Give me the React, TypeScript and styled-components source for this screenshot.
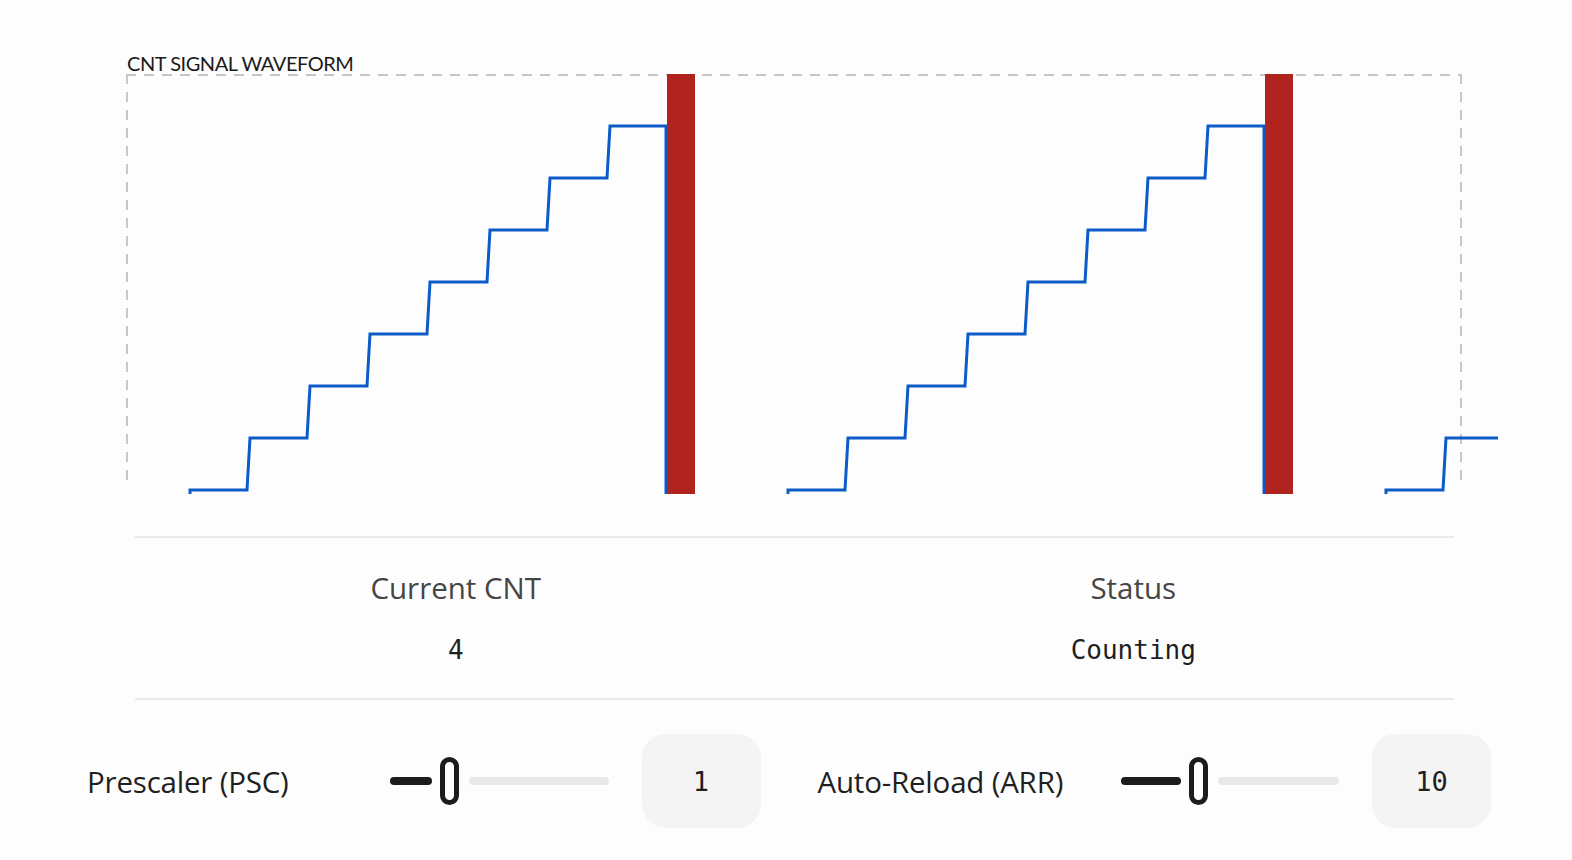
import React, { ReactElement } from 'react';
import styled, { createGlobalStyle } from 'styled-components';

const GlobalStyle = createGlobalStyle`
  html,
  body {
    margin: 0;
    padding: 0;
    background: #fdfdfd;
  }
  body {
    font-family: 'Open Sans', Roboto, 'Liberation Sans', Arial, sans-serif;
    -webkit-font-smoothing: antialiased;
  }
`;

const PageStyled = styled.div`
  width: 1572px;
  height: 860px;
  box-sizing: border-box;
  padding: 52px 81px 0 87px;
  overflow: hidden;
`;

const ChartSection = styled.section`
  margin: 0 29px 0 39px;
`;

const ChartTitle = styled.div`
  font-family: Lato, 'Liberation Sans', sans-serif;
  font-size: 20px;
  line-height: 22px;
  color: #1a1a1a;
  margin-left: 1px;
  letter-spacing: -0.45px;
`;

const dash = '#c7c7c7';

const ChartFrame = styled.div`
  position: relative;
  height: 420px;
  background:
    repeating-linear-gradient(90deg, ${dash} 0 10px, transparent 10px 18px) top left / 100% 2px no-repeat,
    repeating-linear-gradient(180deg, ${dash} 0 10px, transparent 10px 18px) top left / 2px 414px no-repeat,
    repeating-linear-gradient(180deg, ${dash} 0 10px, transparent 10px 18px) top right / 2px 414px no-repeat;
`;

const WaveSvg = styled.svg`
  position: absolute;
  left: 0;
  top: 0;
  overflow: visible;
`;

const StatsRow = styled.div`
  margin: 42px 37px 0 48px;
  padding: 33px 0 33px;
  border-top: 2px solid #e9e9e9;
  border-bottom: 2px solid #e9e9e9;
  display: grid;
  grid-template-columns: 1fr 1fr;
  column-gap: 36px;
`;

const StatBlock = styled.div`
  display: flex;
  flex-direction: column;
  align-items: center;
  gap: 30px;
`;

const StatLabel = styled.div`
  font-size: 29.5px;
  line-height: 34px;
  color: #454545;
`;

const StatValue = styled.div`
  font-family: 'DejaVu Sans Mono', 'Liberation Mono', monospace;
  font-size: 26px;
  line-height: 30px;
  color: #1f1f1f;
`;

const ControlsRow = styled.div`
  margin-top: 34px;
  display: grid;
  grid-template-columns: 1fr 1fr;
  column-gap: 57px;
`;

const ControlGroup = styled.div`
  display: grid;
  grid-template-columns: 270px 1fr 119px;
  column-gap: 33px;
  align-items: center;
`;

const ControlLabel = styled.label`
  font-size: 29.5px;
  color: #1f1f1f;
  white-space: nowrap;
  letter-spacing: -0.2px;
`;

const SliderTrack = styled.div`
  position: relative;
  height: 48px;
`;

const TrackPart = styled.div<{ filled: boolean }>`
  position: absolute;
  top: 20px;
  height: 8px;
  border-radius: 4px;
  background: ${({ filled }) => (filled ? '#1c1c1c' : '#e8e8e8')};
`;

const SliderThumb = styled.div`
  position: absolute;
  top: 0;
  width: 19px;
  height: 48px;
  box-sizing: border-box;
  border: 5px solid #1c1c1c;
  border-radius: 10px;
  background: #ffffff;
`;

const ValueBox = styled.div`
  height: 94px;
  border-radius: 24px;
  background: #f4f4f4;
  display: flex;
  align-items: center;
  justify-content: center;
  font-family: 'DejaVu Sans Mono', 'Liberation Mono', monospace;
  font-size: 27px;
  color: #1f1f1f;
`;

// one ramp of the counter: 8 steps, a drop, then the update-event marker
const PERIOD = 598;
const STEP_W = 60;
const STEP_H = 52;
const BASE_Y = 420;
const LOW_Y = 416;

const buildRamp = (x0: number, steps: number, dropAt?: number): string => {
  let d = `M${x0},${BASE_Y} L${x0},${LOW_Y}`;
  for (let k = 0; k < steps; k++) {
    const y = LOW_Y - STEP_H * k;
    const xs = x0 + STEP_W * k;
    if (k > 0) d += ` L${xs},${y}`;
    const xe = k === steps - 1 && dropAt !== undefined ? dropAt : xs + 57;
    d += ` L${xe},${y}`;
  }
  if (dropAt !== undefined) d += ` L${dropAt},${BASE_Y}`;
  return d;
};

const Waveform = (): ReactElement => {
  const cycles = [0, 1];
  const x2 = 64 + PERIOD * 2;
  return (
    <WaveSvg width="1336" height="420">
      {cycles.map((c) => {
        const x0 = 64 + PERIOD * c;
        return (
          <g key={c}>
            <path
              d={buildRamp(x0, 8, x0 + 476)}
              fill="none"
              stroke="#0c5bc8"
              strokeWidth="3"
            />
            <rect x={x0 + 477} y="0" width="28" height="420" fill="#b1231f" />
          </g>
        );
      })}
      <path
        d={`M${x2},${BASE_Y} L${x2},${LOW_Y} L${x2 + 57},${LOW_Y} L${x2 + 60},${
          LOW_Y - STEP_H
        } L1372,${LOW_Y - STEP_H}`}
        fill="none"
        stroke="#0c5bc8"
        strokeWidth="3"
      />
    </WaveSvg>
  );
};

interface SliderProps {
  value: number;
  min: number;
  max: number;
}

const TRACK_W = 218;
const THUMB_W = 19;

const Slider = ({ value, min, max }: SliderProps): ReactElement => {
  const left = ((value - min) / (max - min)) * (TRACK_W - THUMB_W);
  return (
    <SliderTrack>
      <TrackPart filled style={{ left: 0, width: Math.max(left - 8, 0) }} />
      <TrackPart filled={false} style={{ left: left + THUMB_W + 10, right: 0 }} />
      <SliderThumb style={{ left }} />
    </SliderTrack>
  );
};

function App(): ReactElement {
  const controls = [
    { label: 'Prescaler (PSC)', value: 1, min: 0, max: 4 },
    { label: 'Auto-Reload (ARR)', value: 10, min: 0, max: 29 },
  ];

  return (
    <>
      <GlobalStyle />
      <PageStyled>
        <ChartSection>
          <ChartTitle>CNT SIGNAL WAVEFORM</ChartTitle>
          <ChartFrame>
            <Waveform />
          </ChartFrame>
        </ChartSection>

        <StatsRow>
          <StatBlock>
            <StatLabel>Current CNT</StatLabel>
            <StatValue>4</StatValue>
          </StatBlock>
          <StatBlock>
            <StatLabel>Status</StatLabel>
            <StatValue>Counting</StatValue>
          </StatBlock>
        </StatsRow>

        <ControlsRow>
          {controls.map((c) => (
            <ControlGroup key={c.label}>
              <ControlLabel>{c.label}</ControlLabel>
              <Slider value={c.value} min={c.min} max={c.max} />
              <ValueBox>{c.value}</ValueBox>
            </ControlGroup>
          ))}
        </ControlsRow>
      </PageStyled>
    </>
  );
}

export default App;
